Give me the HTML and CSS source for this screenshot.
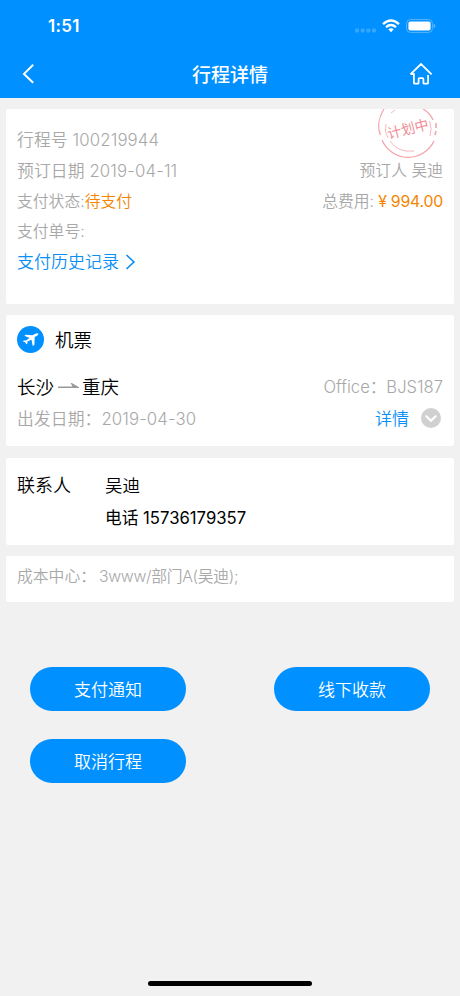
FILE: index.html
```html
<!DOCTYPE html>
<html lang="zh-CN">
<head>
<meta charset="utf-8">
<title>行程详情</title>
<link rel="stylesheet" href="styles.css">
</head>
<body>
<header class="top">
  <div class="status">
    <span class="time">1:51</span>
    <div class="indicators">
      <svg class="signal" width="22" height="5" viewBox="0 0 22 5"><g fill="#35a6ff"><rect x="0" y="0.5" width="4" height="4" rx="1"/><rect x="5.7" y="0.5" width="4" height="4" rx="1"/><rect x="11.4" y="0.5" width="4" height="4" rx="1"/><rect x="17" y="0.5" width="4" height="4" rx="1"/></g></svg>
      <svg class="wifi" width="18" height="14" viewBox="0 0 18 14"><g fill="none" stroke="#fff" stroke-width="2.4"><path d="M1 5.1Q9-1.9 17 5.1"/><path d="M4 8.2Q9 3.9 14 8.2"/></g><path d="M6.3 10.3Q9 8 11.7 10.3L9 13.2Z" fill="#fff"/></svg>
      <svg class="battery" width="30" height="14" viewBox="0 0 30 14"><rect x=".6" y=".6" width="25.8" height="12.8" rx="3.8" fill="none" stroke="#59b6ff"/><rect x="2.4" y="2.4" width="22.2" height="9.2" rx="2" fill="#fff"/><path d="M27.6 4.8Q29.4 5.4 29.4 7T27.6 9.2Z" fill="#59b6ff"/></svg>
    </div>
  </div>
  <nav class="nav">
    <svg class="back" width="14" height="22" viewBox="0 0 14 22"><path d="M12.2 1.7L3 10.9l9.2 8.9" fill="none" stroke="#fff" stroke-width="2"/></svg>
    <h1 class="title">行程详情</h1>
    <svg class="home" width="24" height="24" viewBox="0 0 24 24"><path d="M1.4 12.4L12 2l10.6 10.4M1.8 12.1H4.9v8.6q0 1 1 1h2.7q1 0 1-1v-3.5q0-1 1-1h2.8q1 0 1 1v3.5q0 1 1 1h2.7q1 0 1-1v-7.8" fill="none" stroke="#fff" stroke-width="1.8"/></svg>
  </nav>
</header>
<main class="cards">
  <section class="card trip">
    <div class="row"><span class="number">行程号 100219944</span></div>
    <div class="row"><span class="booked">预订日期 2019-04-11</span><span class="booker">预订人 吴迪</span></div>
    <div class="row small"><span>支付状态:<b class="orange">待支付</b></span><span class="total">总费用: <b class="orange amount">¥ 994.00</b></span></div>
    <div class="row small"><span>支付单号:</span></div>
    <div class="row history"><span>支付历史记录</span><svg width="11" height="18" viewBox="0 0 11 18"><path d="M1.5 2l7.4 7-7.4 7" fill="none" stroke="#0c8ff5" stroke-width="1.7"/></svg></div>
    <svg class="stamp" width="62" height="52" viewBox="0 0 62 52">
      <g fill="none" stroke="#f5a3ac">
        <path d="M7 0C2 8 0 18 3.500 26M5 31A28.500 28.500 0 0 0 57 32" stroke-width="1.3"/>
        <path d="M46 0q7 4 10 11" stroke-width="1.3"/>
        <path d="M59 14v5M59 22l-1 4" stroke-width="1.6"/>
        <path d="M9 15Q7 23 11 29M13 32q8 12 24 10M52.500 12q3 8 .5 15M14 4l4-3" stroke-width=".8"/>
      </g>
      <text x="31" y="25" transform="rotate(-14 31 20)" text-anchor="middle" class="stamp-text">计划中</text>
    </svg>
  </section>
  <section class="card flight">
    <div class="heading">
      <svg width="27" height="27" viewBox="0 0 27 27"><circle cx="13.5" cy="13.5" r="13.5" fill="#0090ff"/><path d="M20.9 7.2Q21.9 7.7 21.1 8.7Q20.1 9.9 17.7 11.1L17.4 19L15.700 20L14.5 13.7L10.4 15.4L10.4 17.500L9.3 18.3L8.2 16.2L5.900 15.5L6.8 14.6L9 14.5L12.5 11.9L7.300 9.7L8.800 8.7L15.4 9.2Q19.300 6.900 20.9 7.2Z" fill="#fff"/></svg>
      <span>机票</span>
    </div>
    <div class="route"><span class="cities"><span>长沙</span><svg width="21" height="8" viewBox="0 0 21 8"><path d="M0 4.3H19.5L14 1L15.500 4" fill="#999" stroke="#999" stroke-width="1.5"/></svg><span>重庆</span></span><span class="office">Office：BJS187</span></div>
    <div class="route depart"><span class="date">出发日期：2019-04-30</span><span class="detail"><span class="link">详情</span><svg width="20" height="20" viewBox="0 0 20 20"><circle cx="10" cy="10" r="10" fill="#d0d0d0"/><path d="M5.3 8.2L10 12.8l4.7-4.6" fill="none" stroke="#fff" stroke-width="2.2" stroke-linecap="round"/></svg></span></div>
  </section>
  <section class="card contact">
    <span class="label">联系人</span>
    <div><div class="name">吴迪</div><div class="phone">电话 15736179357</div></div>
  </section>
  <section class="card cost"><span>成本中心：</span><span class="center">3www/部门A(吴迪);</span></section>
</main>
<div class="actions">
  <button class="btn">支付通知</button>
  <button class="btn">线下收款</button>
  <button class="btn">取消行程</button>
</div>
<div class="home-bar"></div>
</body>
</html>
```
FILE: styles.css
```css
* { box-sizing: border-box; }
body {
  margin: 0;
  width: 460px;
  height: 996px;
  overflow: hidden;
  display: flex;
  flex-direction: column;
  background: #f1f1f1;
  color: #000;
  font-family: Inter, "Noto Sans CJK SC", sans-serif;
  font-size: 17px;
  font-weight: 350;
  white-space: nowrap;
}
svg { display: block; flex: none; }
b { font-weight: inherit; }
.top { height: 98px; background: #0090ff; color: #fff; }
.status { height: 50px; padding: 1px 24px 0 48px; display: flex; justify-content: space-between; align-items: center; }
.time { font-size: 17px; font-weight: 600; letter-spacing: .3px; }
.indicators { display: flex; align-items: center; }
.signal { margin-top: 9px; }
.wifi { margin: 0 6px 0 5px; }
.nav { height: 48px; padding: 0 27px 0 21px; display: grid; grid-template-columns: 24px 1fr 24px; align-items: center; }
.title { margin: 0; padding: 3px 0 0 6px; font-size: 19px; font-weight: 500; line-height: 24px; text-align: center; }
.cards { padding: 11px 6px 0; }
.card { background: #fff; border-radius: 2px; padding: 0 11px; }
.trip { position: relative; height: 195px; padding-top: 16px; margin-bottom: 11px; color: #a8a8a8; }
.row { height: 30.5px; line-height: 30.5px; display: flex; justify-content: space-between; align-items: center; }
.row.small { font-size: 15.8px; padding-top: 1px; }
.number, .booked { font-size: 16.8px; letter-spacing: .12px; }
.booker { font-size: 15.8px; }
.total { letter-spacing: -.1px; }
.amount { font-weight: 400; letter-spacing: -.2px; }
.orange { color: #f58500; }
.history { color: #0c8ff5; justify-content: flex-start; gap: 6px; }
.stamp { position: absolute; left: 371px; top: 0; }
.stamp-text { font-size: 14px; font-weight: 400; fill: #f08d98; }
.flight { height: 131px; padding-top: 11px; margin-bottom: 12px; }
.heading { height: 27px; display: flex; align-items: center; gap: 11px; font-size: 18.5px; }
.heading span { margin-top: -2px; }
.route { display: flex; justify-content: space-between; align-items: center; height: 32px; margin-top: 17px; color: #a8a8a8; }
.depart { margin-top: 0; }
.cities { display: flex; align-items: center; color: #000; font-size: 18.5px; }
.cities svg { margin: 2px 3px 0 4px; }
.office { font-size: 16.6px; }
.date { font-size: 16.8px; letter-spacing: .1px; }
.detail { display: flex; align-items: center; gap: 12px; color: #0c8ff5; padding-right: 2px; }
.link { margin-top: -1px; }
.contact { display: flex; height: 87px; padding-top: 12px; margin-bottom: 11px; line-height: 32px; }
.label { width: 88px; font-size: 18px; }
.name { font-size: 17.5px; }
.phone { font-size: 16.7px; font-weight: 400; }
.cost { height: 46px; line-height: 41px; font-size: 15.8px; color: #a8a8a8; display: flex; gap: 3px; }
.center { letter-spacing: -.3px; }
.actions { padding: 65px 30px 0; display: grid; grid-template-columns: 156px 156px; justify-content: space-between; row-gap: 28px; }
.btn { height: 44px; border: 0; border-radius: 22px; background: #0090ff; color: #fff; font: inherit; padding: 0 0 2px; }
.home-bar { width: 164px; height: 5px; border-radius: 3px; background: #000; margin: auto auto 10px; }
```
